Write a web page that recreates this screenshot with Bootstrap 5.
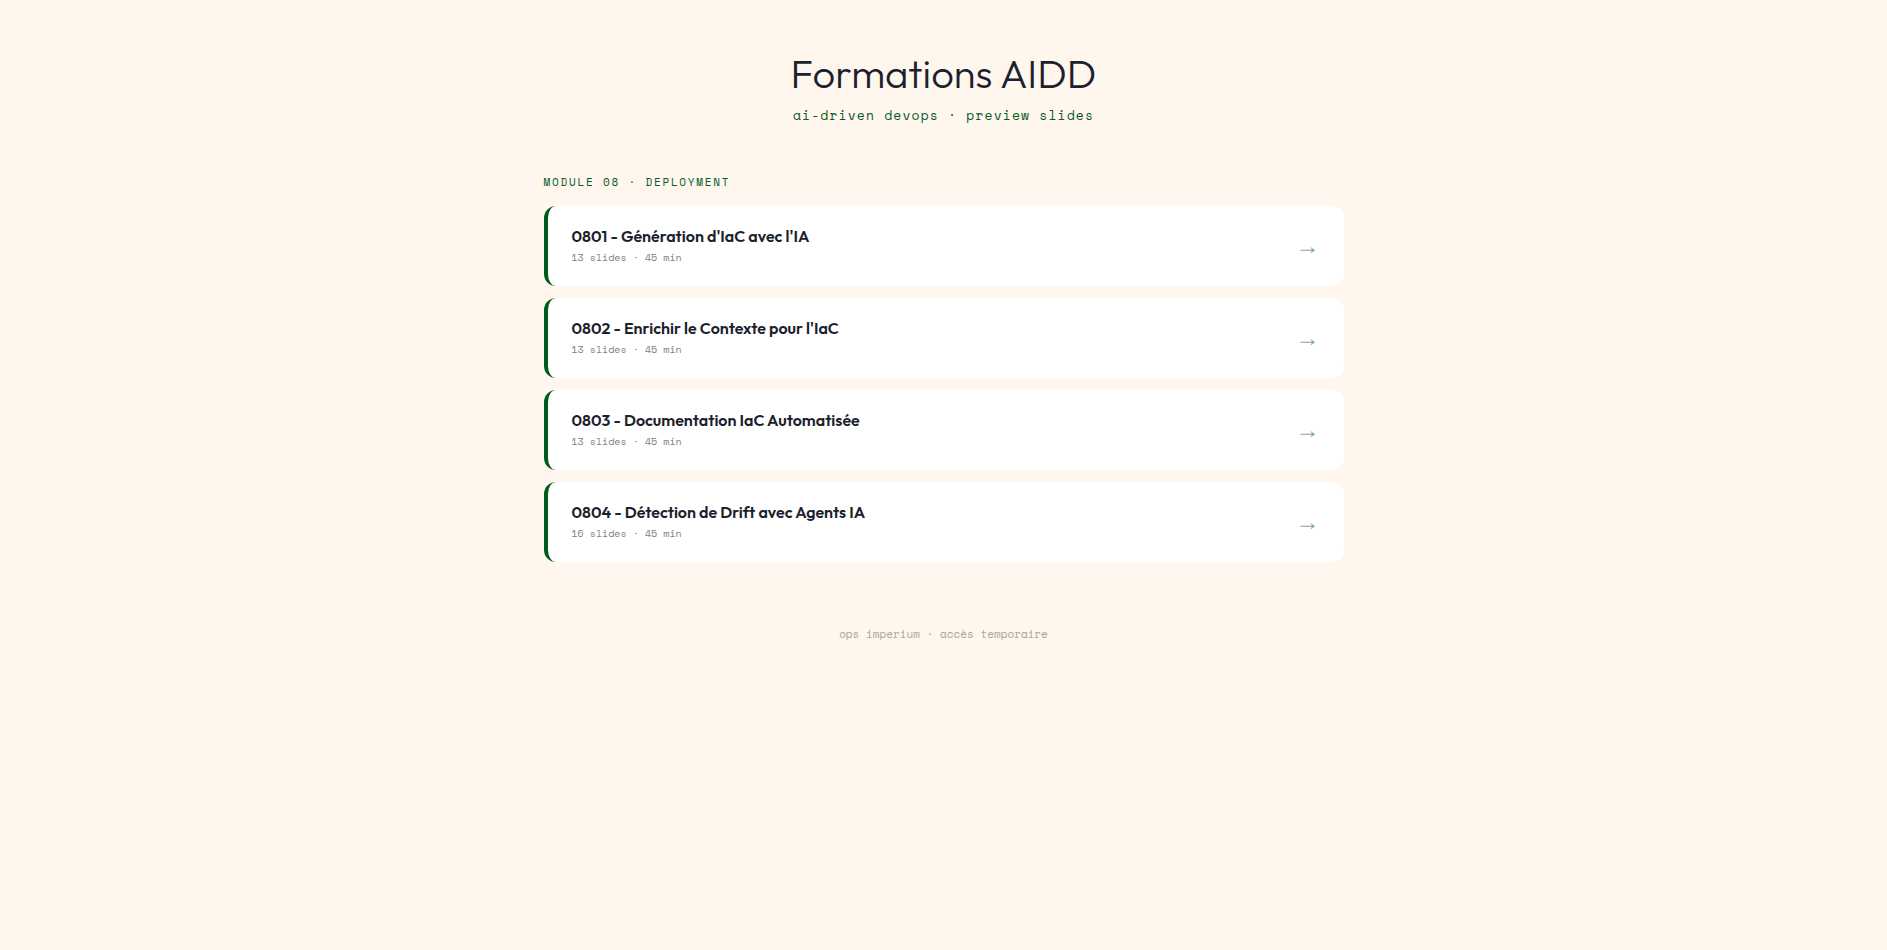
<!DOCTYPE html>
<html lang="fr">
<head>
<meta charset="utf-8">
<meta name="viewport" content="width=device-width, initial-scale=1">
<title>Formations AIDD</title>
<link href="https://cdn.jsdelivr.net/npm/bootstrap@5.3.0/dist/css/bootstrap.min.css" rel="stylesheet">
<style>
body { background: #fff6ed; color: #1b212c; font-family: Outfit, Lato, sans-serif; }
.page { max-width: 800px; }
.mono { font-family: "Space Mono", "Liberation Mono", monospace; }
.page-title { font-size: 40px; font-weight: 300; line-height: 50px; }
.page-header { padding-bottom: 2px; }
.tagline { font-size: 13px; line-height: 18px; letter-spacing: .09em; color: #055a2a; }
.module-title { font-size: 11px; line-height: 16px; letter-spacing: .16em; color: #055a2a; }
.lessons { gap: 12px; }
.lesson { background: #fff; color: inherit; border-left: 4px solid #005a1e; border-radius: 12px; height: 80px; }
.lesson:hover { box-shadow: 0 4px 12px rgba(0, 90, 30, .1); }
.lesson-title { font-size: 16px; line-height: 20px; font-weight: 600; }
.lesson-meta { font-size: 10px; line-height: 16px; color: #7e8084; }
.arrow { font-family: "Liberation Serif", serif; font-size: 24px; line-height: 24px; color: #005a1e; opacity: .5; }
.site-footer { font-size: 11px; line-height: 16px; color: #aaa5a0; }
</style>
</head>
<body>
<div class="page container-fluid px-0 pt-5">
  <header class="page-header text-center mb-5">
    <h1 class="page-title mb-2">Formations AIDD</h1>
    <p class="tagline mono mb-0">ai-driven devops · preview slides</p>
  </header>
  <main>
    <h2 class="module-title mono text-uppercase mb-3">Module 08 · Deployment</h2>
    <nav class="d-grid lessons">
      <a href="#" class="lesson d-flex align-items-center justify-content-between px-4 text-decoration-none"><span><span class="lesson-title d-block mb-1">0801 - Génération d'IaC avec l'IA</span><span class="lesson-meta mono d-block">13 slides · 45 min</span></span><span class="arrow">→</span></a>
      <a href="#" class="lesson d-flex align-items-center justify-content-between px-4 text-decoration-none"><span><span class="lesson-title d-block mb-1">0802 - Enrichir le Contexte pour l'IaC</span><span class="lesson-meta mono d-block">13 slides · 45 min</span></span><span class="arrow">→</span></a>
      <a href="#" class="lesson d-flex align-items-center justify-content-between px-4 text-decoration-none"><span><span class="lesson-title d-block mb-1">0803 - Documentation IaC Automatisée</span><span class="lesson-meta mono d-block">13 slides · 45 min</span></span><span class="arrow">→</span></a>
      <a href="#" class="lesson d-flex align-items-center justify-content-between px-4 text-decoration-none"><span><span class="lesson-title d-block mb-1">0804 - Détection de Drift avec Agents IA</span><span class="lesson-meta mono d-block">16 slides · 45 min</span></span><span class="arrow">→</span></a>
    </nav>
  </main>
  <footer class="site-footer mono text-center py-5 mt-3">ops imperium · accès temporaire</footer>
</div>
<script src="https://cdn.jsdelivr.net/npm/bootstrap@5.3.0/dist/js/bootstrap.bundle.min.js"></script>
</body>
</html>
